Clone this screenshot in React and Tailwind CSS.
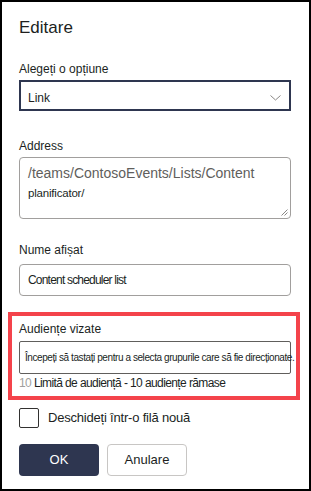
import React from "react";

export default function App() {
  const font = { fontFamily: '"Liberation Sans", Arial, sans-serif' };
  return (
    <div
      style={font}
      className="w-[311px] h-[491px] border-2 border-black bg-white text-[#201f1e] flex flex-col pl-[17px] pr-[18px] pt-[16px]"
    >
      <div className="text-[17px] leading-[20px]">Editare</div>

      <div className="mt-[23px] text-[12px] leading-[16px]">Alegeți o opțiune</div>
      <div className="mt-[3px] h-[31px] border-2 border-[#2e3650] flex items-start justify-between pt-[6px] pl-[7px] pr-[8px]">
        <span className="text-[12px] leading-[16px] mt-[2px]">Link</span>
        <svg width="11" height="6" viewBox="0 0 11 6" className="mt-[7px]">
          <polyline points="0.5,0.5 5.5,5 10.5,0.5" fill="none" stroke="#8a8886" strokeWidth="1" />
        </svg>
      </div>

      <div className="mt-[27px] text-[12px] leading-[16px]">Address</div>
      <div className="relative mt-[3px] h-[62px] border border-[#a19f9d] rounded-[4px] pl-[8px] pt-[7px]">
        <div className="text-[14px] leading-[17px] text-[#605e5c] whitespace-nowrap">/teams/ContosoEvents/Lists/Content</div>
        <div className="mt-[4px] text-[11.5px] leading-[14px] text-[#201f1e] tracking-[-0.2px]">planificator/</div>
        <svg width="7" height="7" viewBox="0 0 7 7" className="absolute right-[2px] bottom-[2px]">
          <line x1="6.5" y1="0.5" x2="0.5" y2="6.5" stroke="#8a8886" strokeWidth="1" />
          <line x1="6.5" y1="3.5" x2="3.5" y2="6.5" stroke="#8a8886" strokeWidth="1" />
        </svg>
      </div>

      <div className="mt-[23px] text-[12px] leading-[16px]">Nume afișat</div>
      <div className="mt-[6px] h-[32px] border border-[#a19f9d] rounded-[4px] pl-[8px] pt-[7px]">
        <div className="text-[12px] leading-[16px] tracking-[-0.8px]">Content scheduler list</div>
      </div>

      <div className="mt-[16px] -ml-[11px] -mr-[9px] border-4 border-[#f4434b] pl-[7px] pr-[5px] pt-[5px] pb-[5px]">
        <div className="text-[12px] leading-[16px]">Audiențe vizate</div>
        <div className="mt-[4px] h-[33px] border border-[#605e5c] rounded-[2px] flex items-center pl-[5px]">
          <span className="text-[10px] leading-[12px] tracking-[-0.42px] whitespace-nowrap text-[#201f1e]">
            Începeți să tastați pentru a selecta grupurile care să fie direcționate.
          </span>
        </div>
        <div className="mt-[1px] text-[12px] leading-[16px] tracking-[-0.6px] whitespace-nowrap">
          <span className="text-[#a19f9d]">10</span> Limită de audiență - 10 audiențe rămase
        </div>
      </div>

      <div className="mt-[8px] flex items-center gap-[9px]">
        <div className="w-[20px] h-[20px] border border-[#323130] rounded-[2px]" />
        <span className="text-[13px] leading-[16px] tracking-[-0.2px]">Deschideți într-o filă nouă</span>
      </div>

      <div className="mt-[16px] flex gap-[8px]">
        <button className="w-[80px] h-[32px] rounded-[4px] bg-[#2e3650] text-white text-[13px]">OK</button>
        <button className="w-[80px] h-[32px] rounded-[4px] border border-[#c8c6c4] bg-white text-[#201f1e] text-[13px]">Anulare</button>
      </div>
    </div>
  );
}
